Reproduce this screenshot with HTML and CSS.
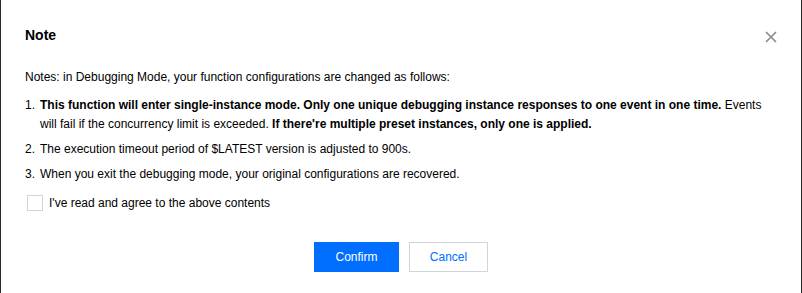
FILE: index.html
```html
<!DOCTYPE html>
<html>
<head>
<meta charset="utf-8">
<link rel="stylesheet" href="styles.css">
</head>
<body>
<div class="dialog">
  <div class="header">
    <h2 class="title">Note</h2>
    <button class="close" aria-label="Close">
      <svg width="12" height="12" viewBox="0 0 12 12"><path d="M1 1L11 11M11 1L1 11" stroke="#888" stroke-width="1.6" fill="none"/></svg>
    </button>
  </div>
  <div class="body">
    <p class="intro">Notes: in Debugging Mode, your function configurations are changed as follows:</p>
    <div class="item item-first"><span class="num">1.</span><span class="txt"><b>This function will enter single-instance mode. Only one unique debugging instance responses to one event in one time.</b> Events<br>will fail if the concurrency limit is exceeded. <b>If there're multiple preset instances, only one is applied.</b></span></div>
    <div class="item"><span class="num">2.</span><span class="txt">The execution timeout period of $LATEST version is adjusted to 900s.</span></div>
    <div class="item"><span class="num">3.</span><span class="txt">When you exit the debugging mode, your original configurations are recovered.</span></div>
    <label class="check"><span class="box"></span><span class="check-label">I've read and agree to the above contents</span></label>
  </div>
  <div class="footer">
    <button class="btn btn-primary">Confirm</button>
    <button class="btn btn-default">Cancel</button>
  </div>
</div>
</body>
</html>
```
FILE: styles.css
```css
html, body {
  margin: 0;
  padding: 0;
  background: #2b2b2b;
}
body {
  width: 802px;
  height: 293px;
  font-family: "Liberation Sans", Arial, sans-serif;
  font-size: 12px;
  color: #000;
}
.dialog {
  margin: 0 1px;
  width: 800px;
  height: 293px;
  background: #fff;
  box-sizing: border-box;
  padding: 25px 24px 0 24px;
}
.header {
  display: flex;
  justify-content: space-between;
  align-items: center;
  height: 20px;
}
.title {
  margin: 0;
  font-size: 14px;
  font-weight: bold;
  line-height: 20px;
}
.close {
  border: 0;
  background: none;
  padding: 0;
  width: 12px;
  height: 12px;
  margin-right: 0;
  margin-top: 4px;
  display: flex;
}
.body {
  margin-top: 23px;
  line-height: 19px;
}
.intro {
  margin: 0;
}
.item {
  display: flex;
  margin-top: 6px;
}
.item-first {
  margin-top: 9px;
}
.num {
  flex: 0 0 15px;
}
.txt {
  flex: 1;
}
.check {
  display: flex;
  align-items: center;
  margin-top: 11px;
  margin-left: 2px;
  height: 16px;
}
.box {
  width: 16px;
  height: 16px;
  box-sizing: border-box;
  border: 1px solid #cfd5de;
  background: #fff;
}
.check-label {
  margin-left: 6px;
  line-height: 16px;
}
.footer {
  display: flex;
  justify-content: center;
  gap: 10px;
  margin-top: 31px;
}
.btn {
  height: 30px;
  box-sizing: border-box;
  font-family: "Liberation Sans", Arial, sans-serif;
  font-size: 12px;
  padding: 0;
  border-radius: 0;
}
.btn-primary {
  width: 85px;
  background: #006eff;
  color: #fff;
  border: 1px solid #006eff;
}
.btn-default {
  width: 79px;
  background: #fff;
  color: #006eff;
  border: 1px solid #cfd5de;
}
```
